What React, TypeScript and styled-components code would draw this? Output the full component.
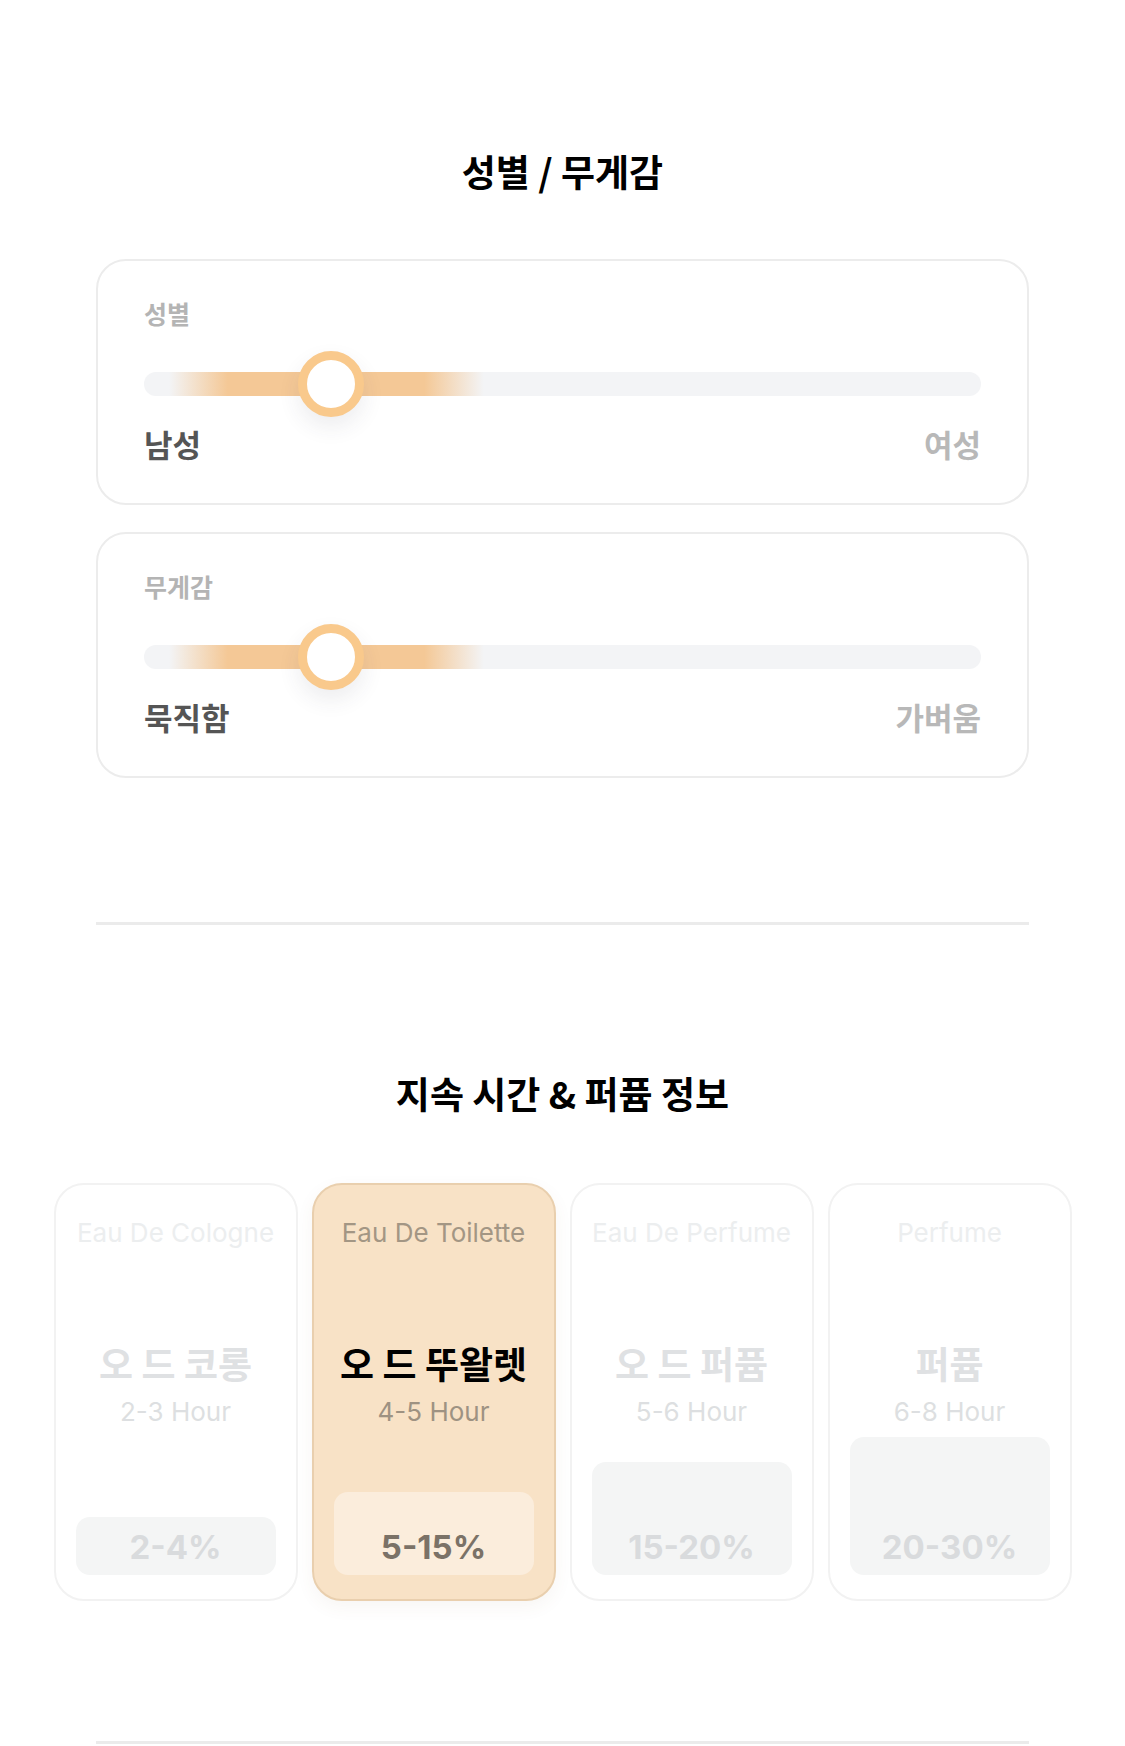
import styled, { createGlobalStyle } from "styled-components";

const GlobalStyle = createGlobalStyle`
  html, body {
    margin: 0;
    padding: 0;
    background: #ffffff;
  }
  body {
    font-family: Inter, "Noto Sans CJK KR", sans-serif;
    -webkit-font-smoothing: antialiased;
  }
`;

const Page = styled.div`
  width: 1125px;
  display: flex;
  flex-direction: column;
  align-items: center;
  padding-top: 148px;
`;

const SectionTitle = styled.h2`
  margin: 0;
  font-family: "Noto Sans CJK KR", sans-serif;
  font-size: 37px;
  line-height: 46px;
  font-weight: 700;
  color: #000;
`;

const SliderList = styled.div`
  width: 933px;
  margin-top: 65px;
  display: flex;
  flex-direction: column;
  gap: 27px;
`;

const SliderCard = styled.div`
  border: 2px solid #ececec;
  border-radius: 30px;
  padding: 36px 46px 39px;
  display: flex;
  flex-direction: column;
  background: #fff;
`;

const SliderLabel = styled.div`
  font-family: "Noto Sans CJK KR", sans-serif;
  font-size: 25px;
  line-height: 32px;
  font-weight: 700;
  color: #b4b4b4;
`;

const TrackRow = styled.div`
  margin-top: 22px;
  height: 66px;
  display: flex;
  align-items: center;
`;

const Track = styled.div`
  position: relative;
  width: 100%;
  height: 24px;
  border-radius: 12px;
  background:
    linear-gradient(
      90deg,
      rgba(244, 200, 150, 0) 3%,
      #f4c896 10%,
      #f4c896 33.5%,
      rgba(244, 200, 150, 0) 40.6%
    ),
    #f3f4f6;
`;

const Thumb = styled.div`
  position: absolute;
  top: 50%;
  width: 48px;
  height: 48px;
  border: 9px solid #f9c98c;
  border-radius: 50%;
  background: #fff;
  transform: translate(-50%, -50%);
  box-shadow: 0 10px 22px rgba(60, 60, 80, 0.09);
`;

const EndLabels = styled.div`
  margin-top: 7px;
  display: flex;
  justify-content: space-between;
`;

const EndLabel = styled.span<{ $active?: boolean }>`
  font-family: "Noto Sans CJK KR", sans-serif;
  font-size: 31px;
  line-height: 40px;
  font-weight: 700;
  color: ${(p) => (p.$active ? "#555555" : "#b8b8b8")};
`;

const Divider = styled.div<{ $gap: number }>`
  width: 933px;
  height: 3px;
  background: #ebebeb;
  margin-top: ${(p) => p.$gap}px;
`;

const InfoTitle = styled(SectionTitle)`
  margin-top: 145px;
`;

const PerfumeGrid = styled.div`
  margin-top: 67px;
  display: grid;
  grid-template-columns: repeat(4, 244px);
  gap: 14px;
`;

const PerfumeCard = styled.div<{ $active?: boolean }>`
  height: 418px;
  box-sizing: border-box;
  border: 2px solid ${(p) => (p.$active ? "#e9cfae" : "#f2f2f2")};
  border-radius: 30px;
  background: ${(p) => (p.$active ? "#f8e2c6" : "#ffffff")};
  box-shadow: ${(p) => (p.$active ? "0 6px 18px rgba(120, 90, 50, 0.06)" : "none")};
  padding: 33px 20px 24px;
  display: flex;
  flex-direction: column;
  align-items: center;
`;

const EnglishName = styled.div<{ $active?: boolean }>`
  font-size: 26px;
  line-height: 30px;
  font-weight: 400;
  white-space: nowrap;
  color: ${(p) => (p.$active ? "#a39684" : "#eceeef")};
`;

const KoreanName = styled.div<{ $active?: boolean }>`
  margin-top: 94px;
  font-family: "Noto Sans CJK KR", sans-serif;
  font-size: 37px;
  line-height: 42px;
  font-weight: 700;
  color: ${(p) => (p.$active ? "#000000" : "#dfe1e3")};
`;

const Duration = styled.div<{ $active?: boolean }>`
  margin-top: 13px;
  font-size: 26px;
  line-height: 30px;
  color: ${(p) => (p.$active ? "#9e9282" : "#dddfe1")};
`;

const Concentration = styled.div<{ $active?: boolean; $height: number }>`
  margin-top: auto;
  width: 100%;
  height: ${(p) => p.$height}px;
  box-sizing: border-box;
  border-radius: 14px;
  background: ${(p) => (p.$active ? "#fbeddc" : "#f4f5f5")};
  display: flex;
  align-items: flex-end;
  justify-content: center;
  padding-bottom: 8px;
  font-size: 33px;
  line-height: 40px;
  font-weight: 700;
  color: ${(p) => (p.$active ? "#7b7267" : "#d9dbdd")};
`;

const sliders = [
  { label: "성별", left: "남성", right: "여성", value: 22.3 },
  { label: "무게감", left: "묵직함", right: "가벼움", value: 22.3 },
];

const perfumes = [
  { en: "Eau De Cologne", ko: "오 드 코롱", hours: "2-3 Hour", pct: "2-4%", box: 58 },
  { en: "Eau De Toilette", ko: "오 드 뚜왈렛", hours: "4-5 Hour", pct: "5-15%", box: 83, active: true },
  { en: "Eau De Perfume", ko: "오 드 퍼퓸", hours: "5-6 Hour", pct: "15-20%", box: 113 },
  { en: "Perfume", ko: "퍼퓸", hours: "6-8 Hour", pct: "20-30%", box: 138 },
];

export default function App() {
  return (
    <>
      <GlobalStyle />
      <Page>
        <SectionTitle>성별 / 무게감</SectionTitle>
        <SliderList>
          {sliders.map((s) => (
            <SliderCard key={s.label}>
              <SliderLabel>{s.label}</SliderLabel>
              <TrackRow>
                <Track>
                  <Thumb style={{ left: `${s.value}%` }} />
                </Track>
              </TrackRow>
              <EndLabels>
                <EndLabel $active>{s.left}</EndLabel>
                <EndLabel>{s.right}</EndLabel>
              </EndLabels>
            </SliderCard>
          ))}
        </SliderList>

        <Divider $gap={144} />

        <InfoTitle>지속 시간 &amp; 퍼퓸 정보</InfoTitle>
        <PerfumeGrid>
          {perfumes.map((p) => (
            <PerfumeCard key={p.en} $active={p.active}>
              <EnglishName $active={p.active}>{p.en}</EnglishName>
              <KoreanName $active={p.active}>{p.ko}</KoreanName>
              <Duration $active={p.active}>{p.hours}</Duration>
              <Concentration $active={p.active} $height={p.box}>
                {p.pct}
              </Concentration>
            </PerfumeCard>
          ))}
        </PerfumeGrid>

        <Divider $gap={140} />
      </Page>
    </>
  );
}
